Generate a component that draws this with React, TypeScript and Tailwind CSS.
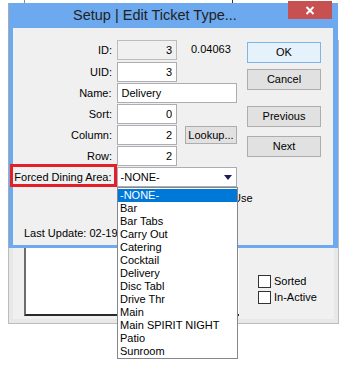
import React from 'react'

const font = "font-['Liberation_Sans',Arial,sans-serif]"

const areas = [
    '-NONE-',
    'Bar',
    'Bar Tabs',
    'Carry Out',
    'Catering',
    'Cocktail',
    'Delivery',
    'Disc Tabl',
    'Drive Thr',
    'Main',
    'Main SPIRIT NIGHT',
    'Patio',
    'Sunroom',
]

const Field = ({ label, value, wide, disabled, left }: { label: string; value: string; wide?: boolean; disabled?: boolean; left?: boolean }) => (
    <div className="flex items-center h-[20px]">
        <div className="w-[99px] text-right">{label}</div>
        <div
            className={`ml-[5px] h-[20px] border flex items-center px-[4px] ${wide ? 'w-[121px]' : 'w-[60px]'} ${left ? 'justify-start' : 'justify-end'} ${disabled ? 'bg-[#f0f0f0] border-[#bcbcbc]' : 'bg-white border-[#abadb3]'}`}
        >
            {value}
        </div>
    </div>
)

const Btn = ({ children, primary, cls }: { children: React.ReactNode; primary?: boolean; cls: string }) => (
    <div
        className={`flex items-center justify-center border ${primary ? 'bg-[#e5f1fb] border-[#7eb4ea]' : 'bg-[#e1e1e1] border-[#adadad]'} ${cls}`}
    >
        {children}
    </div>
)

const CheckRow = ({ label }: { label: string }) => (
    <div className="flex items-center h-[16px]">
        <div className="w-[13px] h-[13px] border border-[#333] bg-white" />
        <span className="ml-[3px]">{label}</span>
    </div>
)

const App = () => {
    return (
        <div className={`relative w-[360px] h-[365px] bg-white overflow-hidden text-[11px] text-black ${font}`}>
            {/* stray edges of windows further back */}
            <div className="absolute left-[24px] top-0 w-px h-[3px] bg-[#8a8a8a]" />
            <div className="absolute left-[232px] top-0 w-px h-[3px] bg-[#333]" />

            {/* window behind the dialog */}
            <div className="absolute left-[8px] top-[40px] w-[331px] h-[284px] border border-[#bcbcbc] bg-[#e8e8e8] p-[4px]">
                <div className="w-full h-full bg-[#f0f0f0] flex items-end">
                    <div className="ml-[11px] mb-[3px] w-[215px] h-[120px] bg-white border-l-2 border-b-2 border-l-[#6d6d6d] border-b-[#2a2a2a]" />
                    <div className="ml-[19px] mb-[14px] flex flex-col">
                        <CheckRow label="Sorted" />
                        <CheckRow label="In-Active" />
                    </div>
                </div>
            </div>

            {/* dialog */}
            <div className="absolute left-[8px] top-[3px] w-[330px] h-[245px] border-l border-l-[#a3adb9] bg-[#6ca9ee] flex flex-col pl-[4px] pr-[5px] pb-[3px]">
                <div className="relative h-[25px] flex items-center pl-[60px] text-[14.5px] text-[#222]">
                    Setup | Edit Ticket Type...
                    <div className="absolute right-[1px] top-[-2px] w-[44px] h-[18px] bg-[#c75050] flex items-center justify-center">
                        <svg width="10" height="9" viewBox="0 0 10 9">
                            <path d="M1.5 1 L8.5 8 M8.5 1 L1.5 8" stroke="#fff" strokeWidth="2" />
                        </svg>
                    </div>
                </div>
                <div className="flex-1 bg-[#f0f0f0] flex">
                    <div className="w-[224px] pt-[12px] flex flex-col">
                        <div className="flex items-center">
                            <Field label="ID:" value="3" disabled />
                            <span className="ml-[14px] -mt-[2px]">0.04063</span>
                        </div>
                        <div className="mt-[2px]"><Field label="UID:" value="3" /></div>
                        <div className="mt-[1px]"><Field label="Name:" value="Delivery" wide left /></div>
                        <div className="mt-[1px]"><Field label="Sort:" value="0" /></div>
                        <div className="mt-[1px] flex items-center">
                            <Field label="Column:" value="2" />
                            <Btn cls="ml-[8px] w-[52px] h-[18px]">Lookup...</Btn>
                        </div>
                        <div className="mt-[1px]"><Field label="Row:" value="2" /></div>
                        <div className="mt-[1px] flex items-center h-[20px]">
                            <div className="relative w-[99px] text-right">
                                Forced Dining Area:
                                <div className="absolute left-[-3px] top-[-5px] w-[107px] h-[23px] border-[3px] border-[#e3202a]" />
                            </div>
                            <div className="ml-[5px] w-[121px] h-[20px] bg-white border border-[#abadb3] flex items-center justify-between pl-[3px] pr-[4px]">
                                <span>-NONE-</span>
                                <svg width="8" height="5" viewBox="0 0 8 5">
                                    <path d="M0 0 H8 L4 5 Z" fill="#1c1c5c" />
                                </svg>
                            </div>
                        </div>
                        <div className="mt-[5px] h-[13px] leading-[13px] pl-[220px]">Use</div>
                        <div className="mt-[22px] h-[13px] leading-[13px] pl-[11px] whitespace-nowrap">Last Update: 02-19</div>
                    </div>
                    <div className="ml-[10px] pt-[14px] flex flex-col">
                        <Btn primary cls="w-[74px] h-[21px]">OK</Btn>
                        <Btn cls="mt-[6px] w-[74px] h-[21px]">Cancel</Btn>
                        <Btn cls="mt-[16px] w-[74px] h-[21px]">Previous</Btn>
                        <Btn cls="mt-[9px] w-[74px] h-[21px]">Next</Btn>
                    </div>
                </div>
            </div>

            {/* open dropdown list */}
            <div className="absolute left-[117px] top-[187px] w-[121px] h-[172px] bg-white border border-[#828790] pt-[1px]">
                {areas.map((a, i) => (
                    <div
                        key={a}
                        className={`h-[13px] leading-[13px] pl-[2px] whitespace-nowrap ${i === 0 ? 'bg-[#0078d7] text-white' : ''}`}
                    >
                        {a}
                    </div>
                ))}
            </div>
        </div>
    )
}

export default App
